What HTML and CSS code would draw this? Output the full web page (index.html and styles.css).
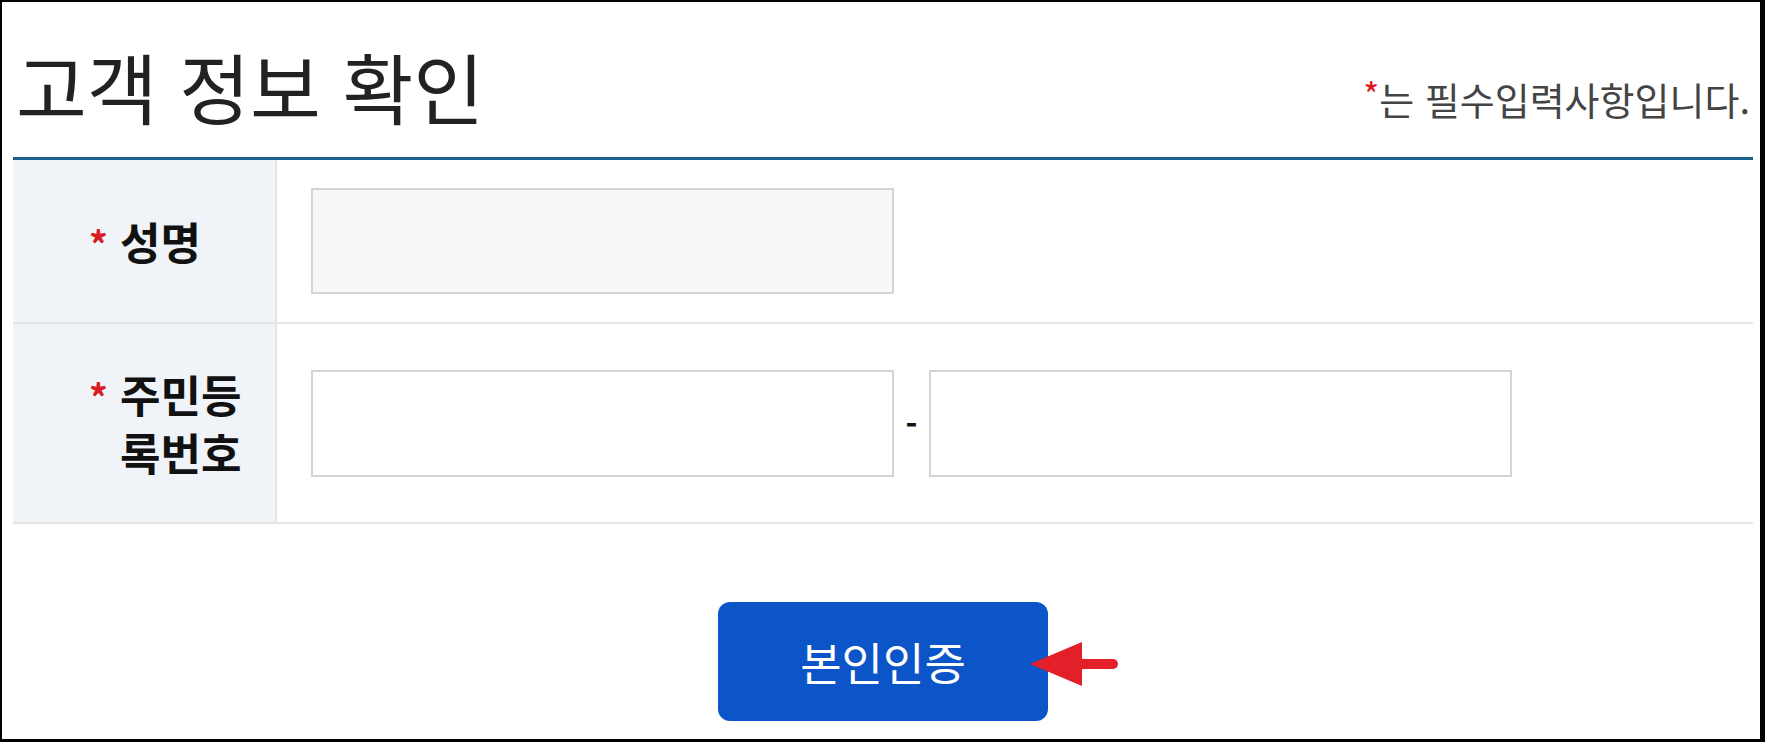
FILE: index.html
```html
<!DOCTYPE html>
<html lang="ko">
<head>
<meta charset="utf-8">
<title>고객 정보 확인</title>
<link rel="stylesheet" href="styles.css">
</head>
<body>
<div class="frame">
  <div class="content">
    <header class="head">
      <h1 class="title">고객 정보 확인</h1>
      <p class="note"><span class="note-star">*</span>는 필수입력사항입니다.</p>
    </header>
    <div class="form">
      <div class="form-row">
        <div class="label"><div class="label-text"><span class="req">*</span>성명</div></div>
        <div class="field">
          <input class="input input-ro" type="text" readonly>
        </div>
      </div>
      <div class="form-row">
        <div class="label"><div class="label-text"><span class="req">*</span>주민등록번호</div></div>
        <div class="field">
          <input class="input" type="text">
          <span class="dash">-</span>
          <input class="input" type="password">
        </div>
      </div>
    </div>
    <div class="actions">
      <div class="btn-wrap">
        <button class="btn" type="button">본인인증</button>
        <svg class="arrow" width="90" height="46" viewBox="0 0 90 46" aria-hidden="true">
          <polygon points="0,23 52,1 52,45" fill="#e3202a"/>
          <line x1="48" y1="23" x2="83" y2="23" stroke="#e3202a" stroke-width="10" stroke-linecap="round"/>
        </svg>
      </div>
    </div>
  </div>
</div>
</body>
</html>
```

FILE: styles.css
```css
* { box-sizing: border-box; }
html, body { margin: 0; padding: 0; background: #fff; }
body {
  font-family: "Noto Sans CJK KR", "Noto Sans", sans-serif;
  color: #111;
}
.frame {
  width: 1765px;
  height: 742px;
  border: 2px solid #000;
  border-right-width: 5px;
  border-bottom-width: 3px;
  overflow: hidden;
}
.content {
  padding: 0 7px 0 11px;
}
.head {
  display: flex;
  justify-content: space-between;
  align-items: flex-end;
  padding: 45px 3px 33px 3px;
}
.title {
  margin: 0;
  font-size: 77px;
  font-weight: 400;
  line-height: 1;
  color: #222;
}
.note {
  margin: 0 0 6px 0;
  font-size: 38px;
  line-height: 1;
  color: #444;
}
.note-star {
  color: #e0141e;
  font-size: 34px;
  vertical-align: 7px;
}
.form {
  border-top: 3px solid #1b5f8e;
}
.form-row {
  display: grid;
  grid-template-columns: 264px 1fr;
  border-bottom: 2px solid #e5e5e5;
}
.label {
  background: #f0f4f8;
  border-right: 2px solid #e2e6ea;
  padding: 41px 10px 41px 107px;
  display: flex;
  align-items: center;
}
.label-text {
  text-indent: -29px;
  font-size: 44px;
  font-weight: 700;
  line-height: 58px;
  color: #111;
}
.req {
  display: inline-block;
  width: 29px;
  text-indent: 0;
  color: #d81e22;
  font-size: 37px;
  vertical-align: 1px;
  line-height: 1;
  margin-left: -2px;
  margin-right: 2px;
}
.field {
  display: flex;
  align-items: center;
  padding: 28px 0 28px 34px;
}
.input {
  width: 583px;
  height: 107px;
  border: 2px solid #d4d4d4;
  background: #fff;
  margin: 0;
  padding: 0 16px;
  font-size: 30px;
  border-radius: 0;
  outline: none;
}
.input-ro {
  height: 106px;
  background: #f8f8f8;
}
.dash {
  width: 35px;
  text-align: center;
  font-size: 32px;
  font-weight: 700;
  line-height: 1;
  color: #111;
}
.actions {
  display: flex;
  justify-content: center;
  padding-top: 78px;
}
.btn-wrap {
  position: relative;
}
.btn {
  display: block;
  width: 330px;
  height: 119px;
  border: 0;
  border-radius: 12px;
  background: #0c55c8;
  color: #fff;
  font-family: "Noto Sans CJK KR", "Noto Sans", sans-serif;
  font-size: 45px;
  font-weight: 400;
  padding: 0;
  cursor: pointer;
}
.arrow {
  position: absolute;
  left: 312px;
  top: 39px;
}
```
